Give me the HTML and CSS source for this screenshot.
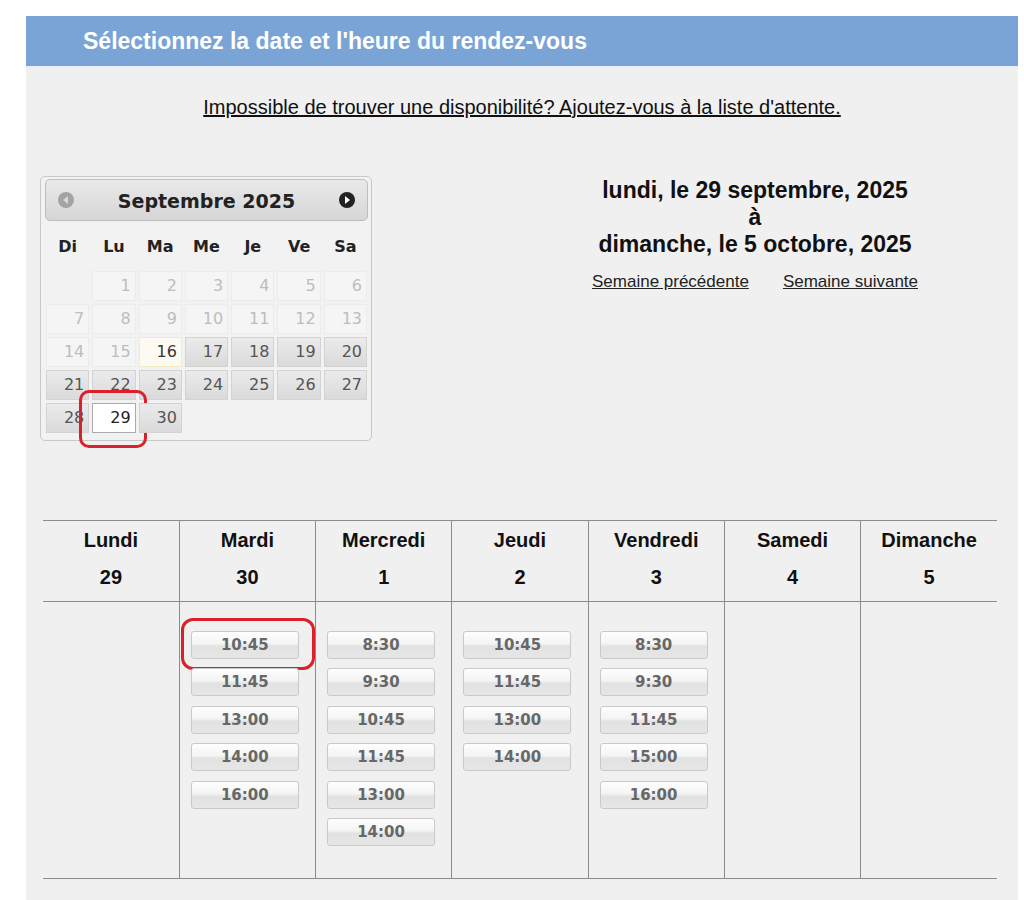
FILE: index.html
```html
<!DOCTYPE html>
<html lang="fr">
<head>
<meta charset="utf-8">
<title>Rendez-vous</title>
<link rel="stylesheet" href="styles.css">
</head>
<body>
<div class="panel">
  <div class="title">Sélectionnez la date et l'heure du rendez-vous</div>
  <p class="waitlist"><a href="#">Impossible de trouver une disponibilité? Ajoutez-vous à la liste d'attente.</a></p>

  <div class="top">
    <div class="cal">
      <div class="cal-head">
        <span class="nav prev"><svg width="18" height="18" viewBox="0 0 18 18"><circle cx="9" cy="9" r="8" fill="#a3a3a3"/><path d="M11 5 L6 9 L11 13 Z" fill="#d8d8d8"/></svg></span>
        <span class="cal-title">Septembre 2025</span>
        <span class="nav next"><svg width="18" height="18" viewBox="0 0 18 18"><circle cx="9" cy="9" r="8" fill="#222"/><path d="M7 5 L12 9 L7 13 Z" fill="#fff"/></svg></span>
      </div>
      <div class="cal-grid">
        <div class="dn">Di</div><div class="dn">Lu</div><div class="dn">Ma</div><div class="dn">Me</div><div class="dn">Je</div><div class="dn">Ve</div><div class="dn">Sa</div>
        <div class="empty"></div>
        <div class="d off">1</div><div class="d off">2</div><div class="d off">3</div><div class="d off">4</div><div class="d off">5</div><div class="d off">6</div>
        <div class="d off">7</div><div class="d off">8</div><div class="d off">9</div><div class="d off">10</div><div class="d off">11</div><div class="d off">12</div><div class="d off">13</div>
        <div class="d off">14</div><div class="d off">15</div><div class="d today">16</div><div class="d">17</div><div class="d">18</div><div class="d">19</div><div class="d">20</div>
        <div class="d">21</div><div class="d">22</div><div class="d">23</div><div class="d">24</div><div class="d">25</div><div class="d">26</div><div class="d">27</div>
        <div class="d">28</div><div class="d active">29<span class="mark mark-day"></span></div><div class="d">30</div>
      </div>
    </div>

    <div class="range">
      <div class="range-text">lundi, le 29 septembre, 2025<br>à<br>dimanche, le 5 octobre, 2025</div>
      <div class="weeks"><a href="#">Semaine précédente</a><a href="#">Semaine suivante</a></div>
    </div>
  </div>

  <table class="week">
    <thead>
      <tr>
        <th><div>Lundi</div><div>29</div></th>
        <th><div>Mardi</div><div>30</div></th>
        <th><div>Mercredi</div><div>1</div></th>
        <th><div>Jeudi</div><div>2</div></th>
        <th><div>Vendredi</div><div>3</div></th>
        <th><div>Samedi</div><div>4</div></th>
        <th><div>Dimanche</div><div>5</div></th>
      </tr>
    </thead>
    <tbody>
      <tr>
        <td></td>
        <td>
          <div class="slots">
            <button class="slot">10:45<span class="mark mark-slot"></span></button>
            <button class="slot">11:45</button>
            <button class="slot">13:00</button>
            <button class="slot">14:00</button>
            <button class="slot">16:00</button>
          </div>
        </td>
        <td>
          <div class="slots">
            <button class="slot">8:30</button>
            <button class="slot">9:30</button>
            <button class="slot">10:45</button>
            <button class="slot">11:45</button>
            <button class="slot">13:00</button>
            <button class="slot">14:00</button>
          </div>
        </td>
        <td>
          <div class="slots">
            <button class="slot">10:45</button>
            <button class="slot">11:45</button>
            <button class="slot">13:00</button>
            <button class="slot">14:00</button>
          </div>
        </td>
        <td>
          <div class="slots">
            <button class="slot">8:30</button>
            <button class="slot">9:30</button>
            <button class="slot">11:45</button>
            <button class="slot">15:00</button>
            <button class="slot">16:00</button>
          </div>
        </td>
        <td></td>
        <td></td>
      </tr>
    </tbody>
  </table>
</div>
</body>
</html>
```

FILE: styles.css
```css
html, body {
  margin: 0;
  padding: 0;
  background: #ffffff;
}

body {
  font-family: "Liberation Sans", Arial, sans-serif;
  color: #111;
}

a {
  color: #111;
  text-decoration: underline;
}

.panel {
  margin: 16px 0 0 26px;
  width: 992px;
  min-height: 900px;
  background: #f0f0f0;
}

.title {
  height: 50px;
  line-height: 50px;
  background: #79a4d5;
  color: #fff;
  font-weight: bold;
  font-size: 23px;
  padding-left: 57px;
  border-bottom: 1px solid #e4edf7;
}

.waitlist {
  margin: 28px 0 0;
  text-align: center;
  font-size: 20px;
  line-height: 24px;
}

.top {
  display: flex;
  align-items: flex-start;
  margin-top: 57px;
}

/* ---------- datepicker ---------- */
.cal {
  margin-left: 14px;
  width: 324px;
  padding: 2px 3px 7px 3px;
  border: 1px solid #c8c8c8;
  border-radius: 5px;
  background: #f2f2f2;
  font-family: "DejaVu Sans", Verdana, sans-serif;
}

.cal-head {
  display: flex;
  align-items: center;
  justify-content: space-between;
  height: 40px;
  padding: 0 11px;
  margin-left: 1px;
  border: 1px solid #bdbdbd;
  border-radius: 5px;
  background: linear-gradient(#e9e9e9, #d6d6d6);
}

.nav {
  display: flex;
  width: 18px;
  height: 18px;
}

.cal-title {
  font-weight: bold;
  font-size: 19px;
  color: #222;
  margin-top: 1px;
}

.cal-grid {
  display: grid;
  grid-template-columns: repeat(7, 1fr);
  grid-template-rows: 47px;
  grid-auto-rows: 30px;
  column-gap: 3px;
  row-gap: 3px;
  margin-left: 2px;
  width: 321px;
}

.dn {
  height: 47px;
  line-height: 52px;
  text-align: center;
  font-weight: bold;
  font-size: 16px;
  color: #222;
}

.d {
  position: relative;
  box-sizing: border-box;
  text-align: right;
  padding-right: 4px;
  font-size: 16px;
  line-height: 28px;
  border: 1px solid #d3d3d3;
  background: linear-gradient(#ebebeb, #dadada);
  color: #555;
}

.d.off {
  border-color: #ececec;
  background: #f5f5f5;
  color: #bdbdbd;
}

.d.today {
  border-color: #f3ecc4;
  background: #fcfaf1;
  color: #363636;
}

.d.active {
  border-color: #aaaaaa;
  background: #ffffff;
  color: #212121;
}

.mark {
  position: absolute;
  border: 3px solid #d9202b;
  pointer-events: none;
}

.mark-day {
  left: -14px;
  right: -12px;
  top: -14px;
  bottom: -16px;
  border-radius: 10px;
}

/* ---------- range ---------- */
.range {
  margin-left: auto;
  margin-right: 53px;
  width: 420px;
  margin-top: 1px;
  text-align: center;
}

.range-text {
  font-weight: bold;
  font-size: 23px;
  line-height: 27px;
  color: #111;
}

.weeks {
  display: flex;
  justify-content: center;
  gap: 34px;
  margin-top: 14px;
  font-size: 17px;
}

.weeks a {
  color: #222;
}

/* ---------- week table ---------- */
.week {
  margin: 79px 0 0 17px;
  width: 954px;
  border-collapse: collapse;
  table-layout: fixed;
}

.week th,
.week td {
  border-left: 1px solid #8c8c8c;
  padding: 0;
}

.week th:first-child,
.week td:first-child {
  border-left: none;
}

.week thead tr {
  border-top: 1px solid #8c8c8c;
  border-bottom: 1px solid #8c8c8c;
}

.week tbody tr {
  border-bottom: 1px solid #8c8c8c;
}

.week th {
  height: 80px;
  font-size: 20px;
  font-weight: bold;
  color: #111;
  vertical-align: top;
}

.week th div:first-child {
  margin-top: 8px;
  line-height: 22px;
}

.week th div:last-child {
  margin-top: 15px;
  line-height: 22px;
}

.week td {
  height: 276px;
  vertical-align: top;
}

.slots {
  display: flex;
  flex-direction: column;
  gap: 9.4px;
  padding: 29px 0 0 11px;
}

.slot {
  position: relative;
  box-sizing: border-box;
  width: 108px;
  height: 28px;
  padding: 0;
  border: 1px solid #c9c9c9;
  border-radius: 3px;
  background: linear-gradient(#fefefe 0%, #f4f4f4 45%, #e2e2e2 55%, #e6e6e6 100%);
  font-family: "DejaVu Sans", Verdana, sans-serif;
  font-weight: bold;
  font-size: 15px;
  color: #676767;
  text-align: center;
}

.mark-slot {
  left: -11px;
  right: -17px;
  top: -14px;
  bottom: -12px;
  border-radius: 12px;
}
```
